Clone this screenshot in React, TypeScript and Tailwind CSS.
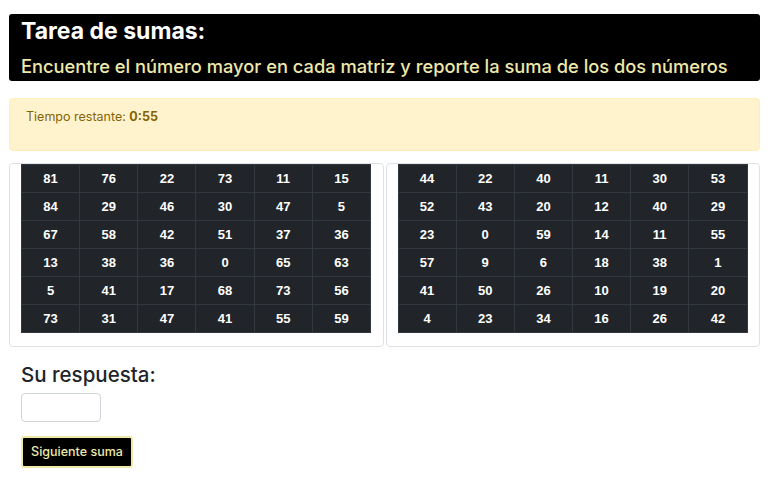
const MATRIZ_A = [
  [81, 76, 22, 73, 11, 15],
  [84, 29, 46, 30, 47, 5],
  [67, 58, 42, 51, 37, 36],
  [13, 38, 36, 0, 65, 63],
  [5, 41, 17, 68, 73, 56],
  [73, 31, 47, 41, 55, 59],
];

const MATRIZ_B = [
  [44, 22, 40, 11, 30, 53],
  [52, 43, 20, 12, 40, 29],
  [23, 0, 59, 14, 11, 55],
  [57, 9, 6, 18, 38, 1],
  [41, 50, 26, 10, 19, 20],
  [4, 23, 34, 16, 26, 42],
];

const Matriz = ({ datos }: { datos: number[][] }) => (
  <div className="flex-1 rounded-[4px] border border-[#dee2e6] pb-[13px]">
    <table className="ml-[11px] w-[350px] table-fixed border-collapse bg-[#212529] font-['Liberation_Sans',Arial,sans-serif] text-white">
      <tbody>
        {datos.map((fila, i) => (
          <tr key={i} className="h-[28px]">
            {fila.map((n, j) => (
              <td
                key={j}
                className="border border-[#32383e] p-0 text-center text-[13px] font-bold leading-[27px]"
              >
                {n}
              </td>
            ))}
          </tr>
        ))}
      </tbody>
    </table>
  </div>
);

export default function App() {
  return (
    <main className="min-h-[486px] bg-white pl-[9px] pr-[19px] pt-[14px] font-['Inter',sans-serif]">
      <header className="rounded-[3px] bg-black px-[12px] pb-[3px] pt-[3px]">
        <h1 className="text-[23px] font-bold leading-[28px] text-white">Tarea de sumas:</h1>
        <h2 className="mt-[9px] text-[18.3px] font-medium leading-[24px] text-[#eee8aa]">
          Encuentre el número mayor en cada matriz y reporte la suma de los dos números
        </h2>
      </header>

      <div className="mt-[17px] rounded-[4px] border border-[#ffeeba] bg-[#fff3cd] px-[16px] pb-[23px] pt-[8px] text-[12.5px] leading-[20px] text-[#856404]">
        Tiempo restante: <b>0:55</b>
      </div>

      <section className="mt-[12px] flex gap-[2px]">
        <Matriz datos={MATRIZ_A} />
        <Matriz datos={MATRIZ_B} />
      </section>

      <div className="px-[12px]">
        <p className="mt-[16px] text-[20.5px] font-medium leading-[24px] text-[#212529]">Su respuesta:</p>
        <input
          type="text"
          className="mt-[6px] block h-[29px] w-[80px] rounded-[4px] border border-[#ced4da] bg-white px-2 outline-none"
        />
        <button className="mt-[14px] block h-[32px] w-[112px] rounded-[3px] border-2 border-[#eee8aa] bg-black text-[12.5px] font-medium text-[#eee8aa]">
          Siguiente suma
        </button>
      </div>
    </main>
  );
}
